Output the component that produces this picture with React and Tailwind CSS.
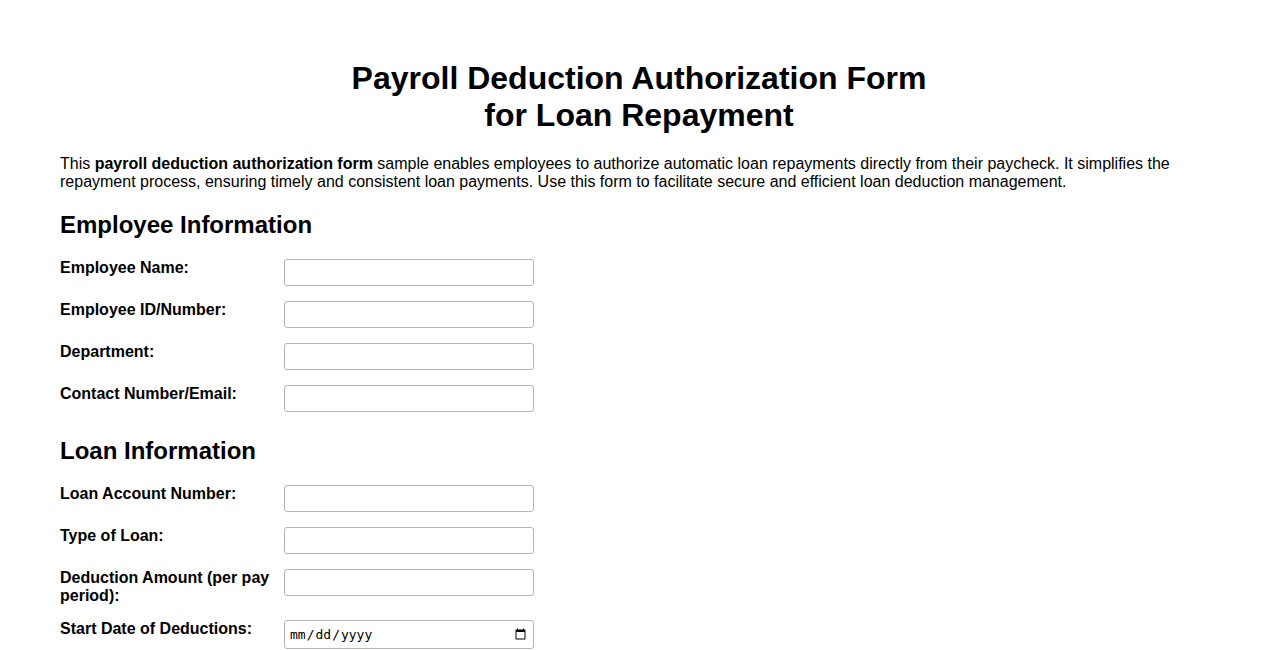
const employeeFields = [
  { id: 'emp-name', label: 'Employee Name:' },
  { id: 'emp-id', label: 'Employee ID/Number:' },
  { id: 'dept', label: 'Department:' },
  { id: 'contact', label: 'Contact Number/Email:' },
];

const loanFields = [
  { id: 'loan-acct', label: 'Loan Account Number:' },
  { id: 'loan-type', label: 'Type of Loan:' },
  { id: 'amount', label: 'Deduction Amount (per pay period):' },
  { id: 'start', label: 'Start Date of Deductions:', type: 'date' },
];

function Field({ id, label, type = 'text' }) {
  return (
    <div className="flex items-start mb-[15px]">
      <label htmlFor={id} className="w-[224px] pr-[10px] font-bold text-[16px] leading-[18px]">
        {label}
      </label>
      {type === 'date' ? (
        <input
          id={id}
          type="date"
          className="w-[250px] h-[29px] px-[4px] border border-[#b5b5b5] rounded-[3px] bg-white text-[13px] font-['DejaVu_Sans_Mono',monospace] text-black"
        />
      ) : (
        <input
          id={id}
          type="text"
          className="w-[250px] h-[27px] px-[4px] border border-[#b5b5b5] rounded-[3px] bg-white text-[13px]"
        />
      )}
    </div>
  );
}

function Section({ title, fields, first }) {
  return (
    <section className={first ? 'mt-[20px]' : 'mt-[25px]'}>
      <h2 className="text-[24px] leading-[28px] font-bold mb-[20px]">{title}</h2>
      {fields.map(f => (
        <Field key={f.id} {...f} />
      ))}
    </section>
  );
}

export default function App() {
  return (
    <div className="min-h-screen bg-white text-black font-['Liberation_Sans',Arial,sans-serif] px-[60px] pt-[60px] pb-10">
      <h1 className="text-[32px] leading-[37px] font-bold text-center">
        Payroll Deduction Authorization Form
        <br />
        for Loan Repayment
      </h1>

      <p className="mt-[21px] text-[16px] leading-[18px]">
        This <strong>payroll deduction authorization form</strong> sample enables employees to authorize automatic loan
        repayments directly from their paycheck. It simplifies the repayment process, ensuring timely and consistent
        loan payments. Use this form to facilitate secure and efficient loan deduction management.
      </p>

      <Section title="Employee Information" fields={employeeFields} first />
      <Section title="Loan Information" fields={loanFields} />
    </div>
  );
}
